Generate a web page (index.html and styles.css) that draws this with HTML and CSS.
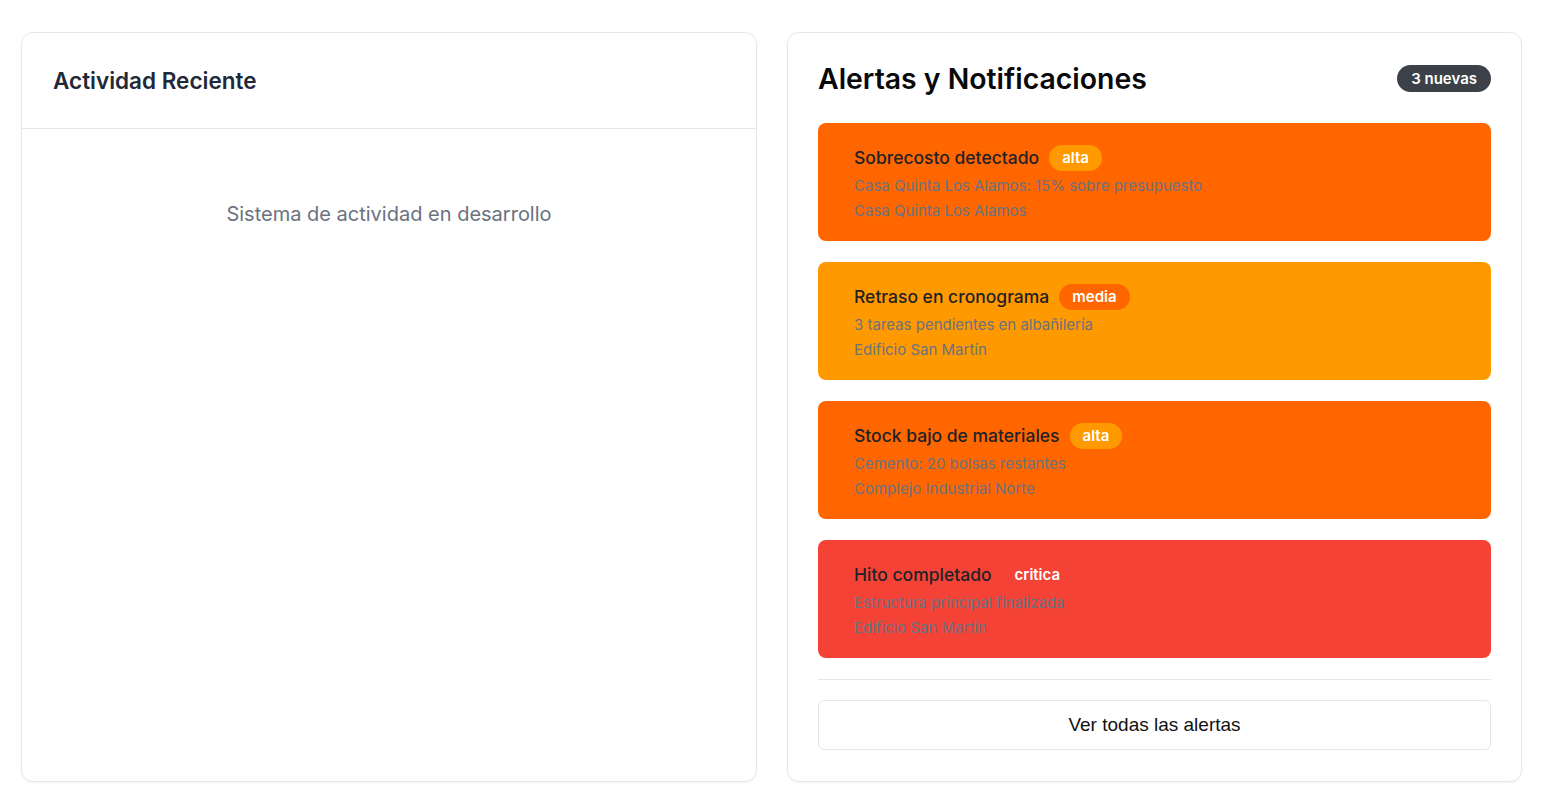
FILE: index.html
```html
<!DOCTYPE html>
<html lang="es">
<head>
<meta charset="utf-8">
<title>Panel</title>
<link rel="stylesheet" href="styles.css">
</head>
<body>
<main class="grid">
  <section class="card activity">
    <header class="activity-head">
      <h2 class="activity-title">Actividad Reciente</h2>
    </header>
    <div class="activity-body">
      <p class="empty">Sistema de actividad en desarrollo</p>
    </div>
  </section>

  <section class="card alerts">
    <div class="alerts-head">
      <h2 class="alerts-title">Alertas y Notificaciones</h2>
      <span class="count">3 nuevas</span>
    </div>
    <div class="alert-list">
      <div class="alert alert-orange">
        <div class="alert-top">
          <span class="alert-title">Sobrecosto detectado</span>
          <span class="pill pill-amber">alta</span>
        </div>
        <p class="alert-line">Casa Quinta Los Alamos: 15% sobre presupuesto</p>
        <p class="alert-line">Casa Quinta Los Alamos</p>
      </div>
      <div class="alert alert-amber">
        <div class="alert-top">
          <span class="alert-title">Retraso en cronograma</span>
          <span class="pill pill-orange">media</span>
        </div>
        <p class="alert-line">3 tareas pendientes en albañilería</p>
        <p class="alert-line">Edificio San Martín</p>
      </div>
      <div class="alert alert-orange">
        <div class="alert-top">
          <span class="alert-title">Stock bajo de materiales</span>
          <span class="pill pill-amber">alta</span>
        </div>
        <p class="alert-line">Cemento: 20 bolsas restantes</p>
        <p class="alert-line">Complejo Industrial Norte</p>
      </div>
      <div class="alert alert-red">
        <div class="alert-top">
          <span class="alert-title">Hito completado</span>
          <span class="pill pill-red">critica</span>
        </div>
        <p class="alert-line">Estructura principal finalizada</p>
        <p class="alert-line">Edificio San Martín</p>
      </div>
    </div>
    <div class="alerts-foot">
      <button class="all-btn" type="button">Ver todas las alertas</button>
    </div>
  </section>
</main>
</body>
</html>
```

FILE: styles.css
```css
* { box-sizing: border-box; }

html, body {
  margin: 0;
  padding: 0;
  background: #ffffff;
  height: 793px;
  overflow: hidden;
}

body {
  font-family: Inter, "Noto Sans", sans-serif;
  color: #111827;
}

.grid {
  display: grid;
  grid-template-columns: 736px 735px;
  column-gap: 30px;
  padding: 32px 32px 0 21px;
  height: 781px;
}

.card {
  background: #fff;
  border: 1px solid #e5e7eb;
  border-radius: 12px;
  box-shadow: 0 1px 2px rgba(0, 0, 0, 0.05);
  display: flex;
  flex-direction: column;
}

/* Left card */
.activity-head {
  height: 96px;
  padding: 0 31px;
  display: flex;
  align-items: center;
  border-bottom: 1px solid #e5e7eb;
}

.activity-title {
  margin: 0;
  font-size: 22.5px;
  line-height: 28px;
  font-weight: 600;
  color: #1f2937;
  padding-top: 0;
}

.activity-body {
  padding: 71px 31px 0;
}

.empty {
  margin: 0;
  text-align: center;
  font-size: 20px;
  line-height: 28px;
  color: #6b7280;
}

/* Right card */
.alerts {
  padding: 30px 30px 31px;
}

.alerts-head {
  display: flex;
  align-items: center;
  justify-content: space-between;
  height: 32px;
}

.alerts-title {
  margin: 0;
  font-size: 28.4px;
  line-height: 32px;
  font-weight: 600;
  color: #09090b;
}

.count {
  background: #3c4048;
  color: #fff;
  font-size: 15px;
  font-weight: 600;
  line-height: 27px;
  height: 27px;
  padding: 0 14px;
  border-radius: 999px;
  margin-top: -2px;
}

.alert-list {
  display: flex;
  flex-direction: column;
  gap: 21px;
  margin-top: 28px;
}

.alert {
  height: 118px;
  border-radius: 8px;
  padding: 22px 36px 0;
}

.alert-orange { background: #ff6600; }
.alert-amber { background: #ff9900; }
.alert-red { background: #f44336; }

.alert-top {
  display: flex;
  align-items: center;
  gap: 10px;
  height: 26px;
  margin-bottom: 2px;
}

.alert-title {
  font-size: 17.5px;
  line-height: 24px;
  color: #1f2226;
  font-weight: 450;
}

.pill {
  font-size: 15px;
  font-weight: 600;
  color: #fff;
  height: 26px;
  line-height: 26px;
  padding: 0 13px;
  border-radius: 999px;
}

.pill-amber { background: #ff9900; }
.pill-orange { background: #ff6600; }
.pill-red { background: #f44336; }

.alert-line {
  margin: 0;
  font-size: 15px;
  line-height: 25px;
  color: #6b7280;
}

.alerts-foot {
  margin-top: 21px;
  border-top: 1px solid #e5e7eb;
  padding-top: 20px;
}

.all-btn {
  display: block;
  width: 100%;
  height: 50px;
  background: #fff;
  border: 1px solid #e5e7eb;
  border-radius: 6px;
  font-family: "Liberation Sans", Arial, sans-serif;
  font-size: 19px;
  color: #111;
  cursor: pointer;
}
```
